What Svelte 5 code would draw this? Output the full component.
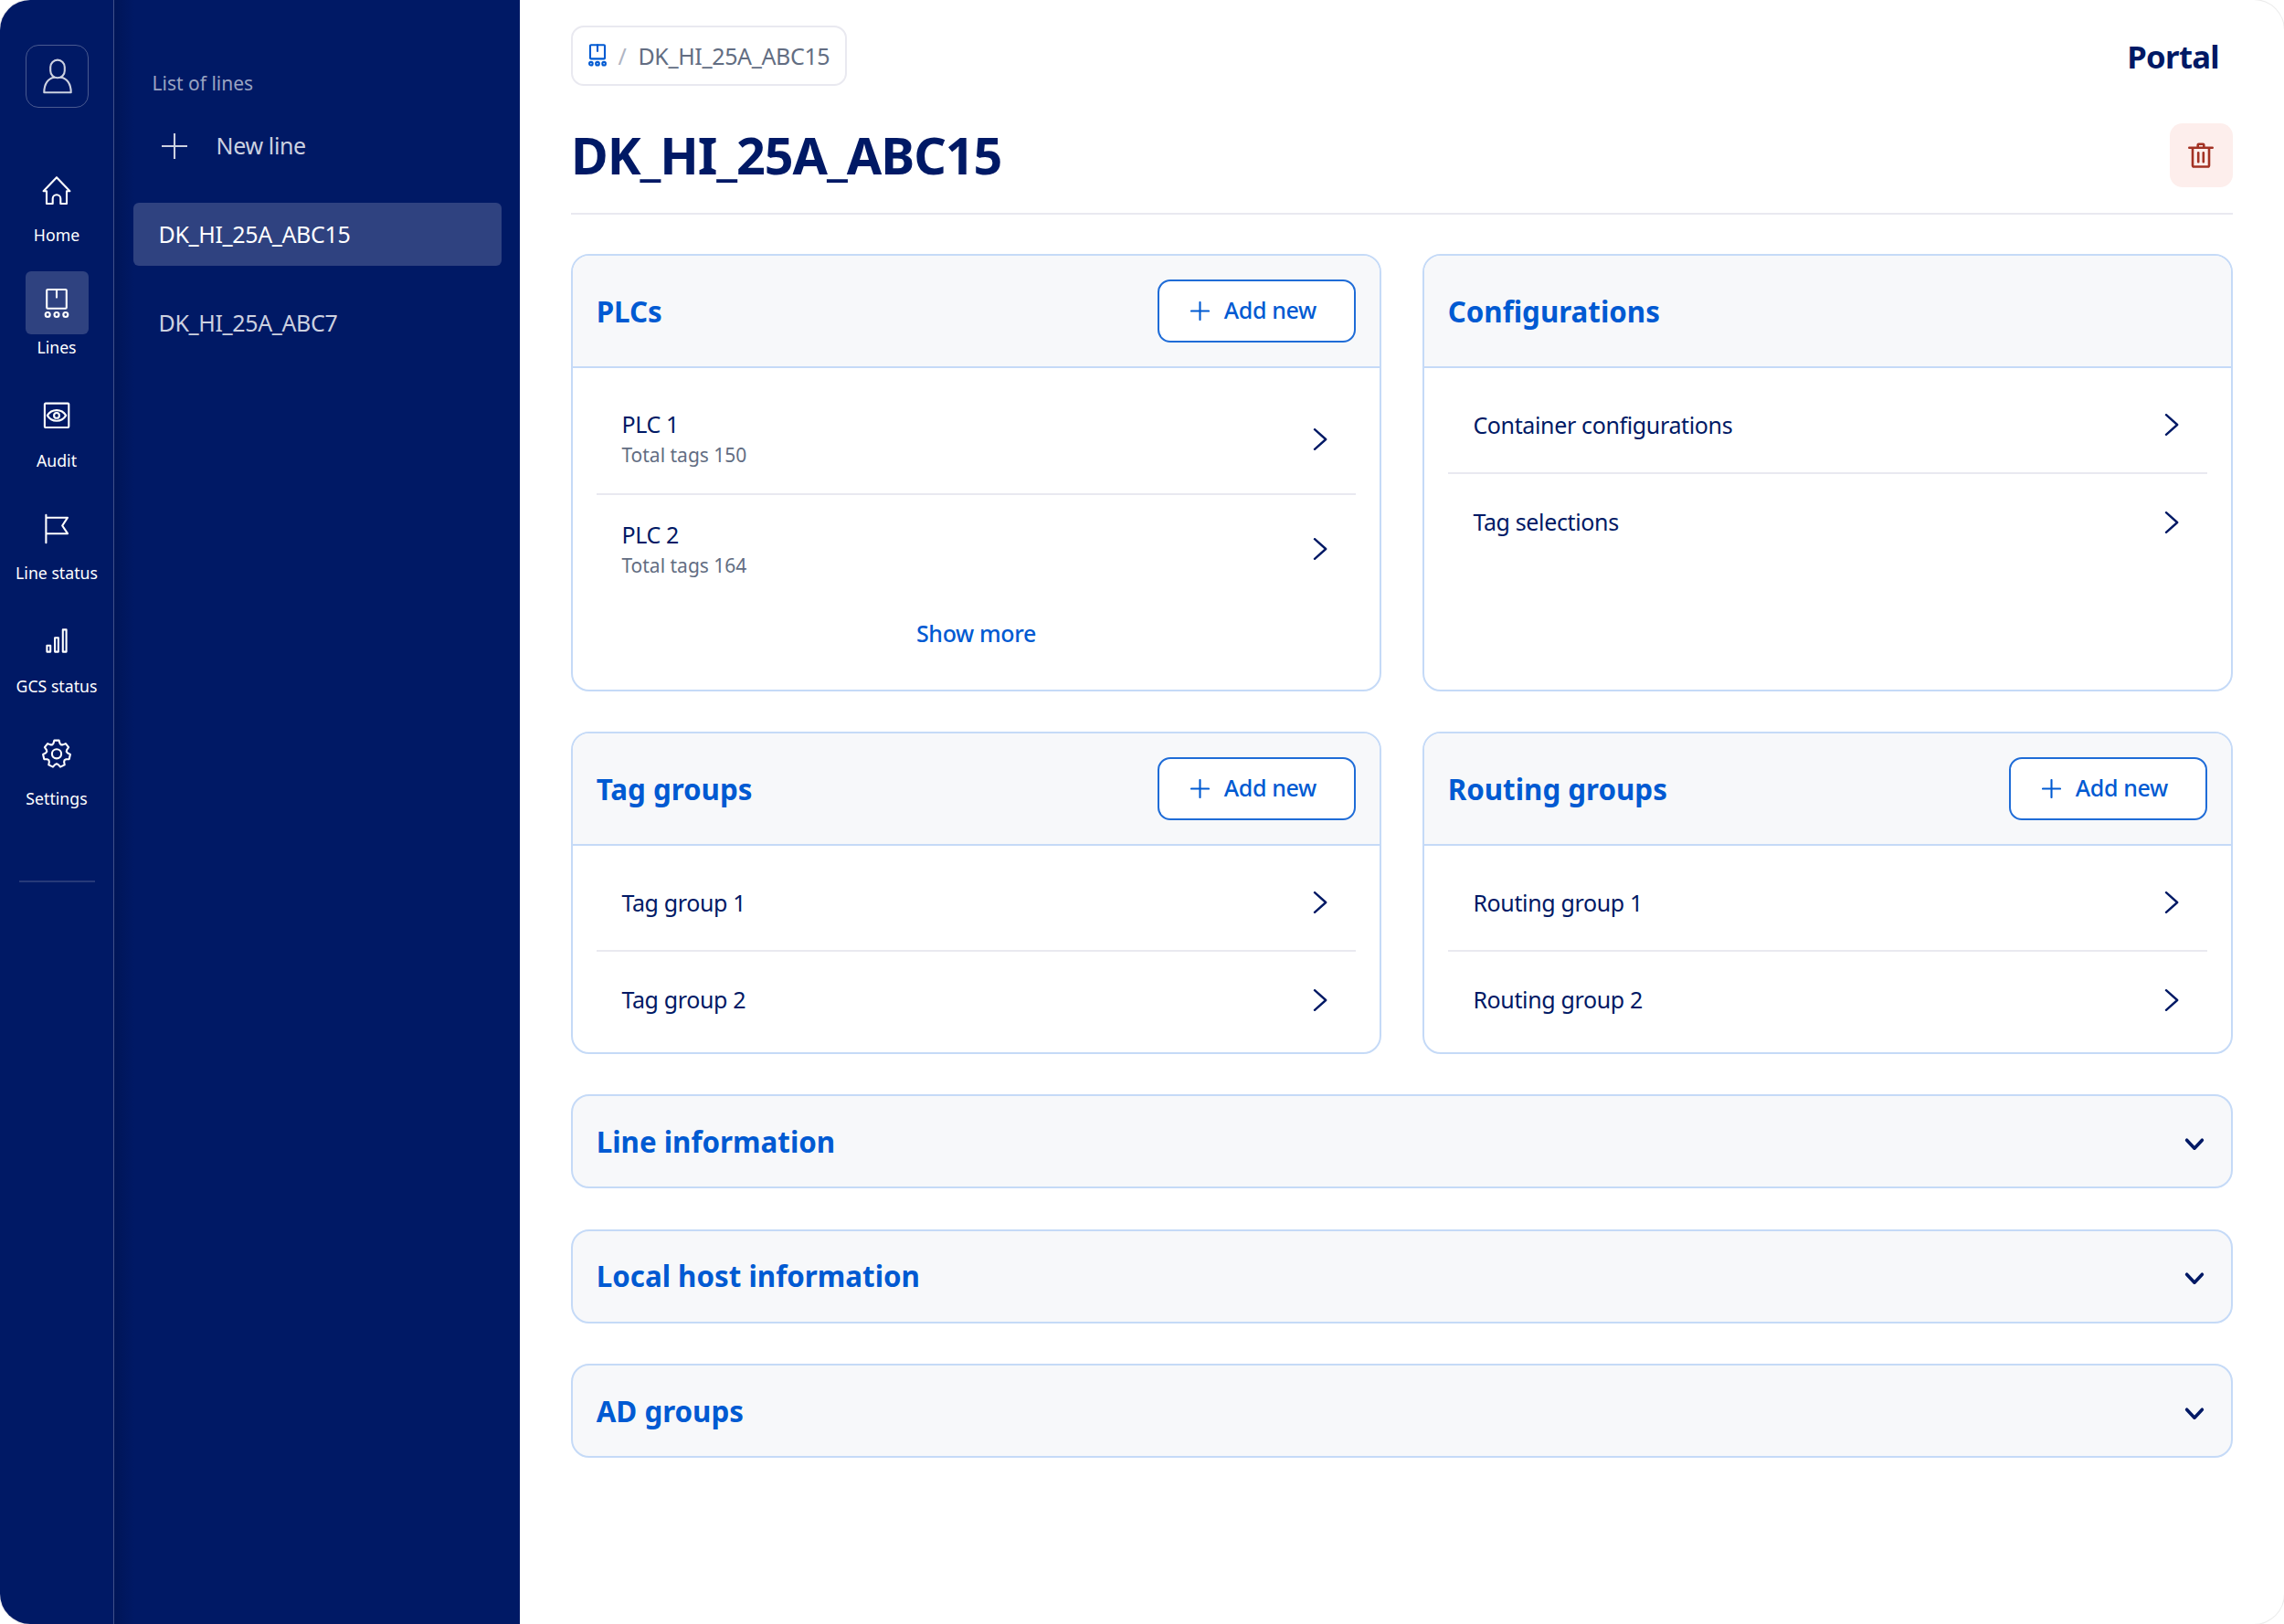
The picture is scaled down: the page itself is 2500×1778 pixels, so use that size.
<script>
	const navItems = [
		{ key: "home", title: "Home" },
		{ key: "lines", title: "Lines" },
		{ key: "audit", title: "Audit" },
		{ key: "flag", title: "Line status" },
		{ key: "bars", title: "GCS status" },
		{ key: "gear", title: "Settings" },
	];

	const lines = ["DK_HI_25A_ABC15", "DK_HI_25A_ABC7"];

	let activeNav = "lines";
	let activeLine = lines[0];

	const cards = [
		{
			title: "PLCs",
			canAdd: true,
			more: true,
			rows: [
				{ name: "PLC 1", note: "Total tags 150" },
				{ name: "PLC 2", note: "Total tags 164" },
			],
		},
		{
			title: "Configurations",
			rows: [{ name: "Container configurations" }, { name: "Tag selections" }],
		},
		{
			title: "Tag groups",
			canAdd: true,
			rows: [{ name: "Tag group 1" }, { name: "Tag group 2" }],
		},
		{
			title: "Routing groups",
			canAdd: true,
			rows: [{ name: "Routing group 1" }, { name: "Routing group 2" }],
		},
	];

	const sections = ["Line information", "Local host information", "AD groups"];

	// outline of the seven-toothed settings wheel
	function gearPath(cx, cy) {
		const steps = [[-10, 14.9], [10, 14.9], [17, 12], [25.7, 11], [34.4, 12]];
		const points = [];
		for (let i = 0; i < 7; i++) {
			for (const [deg, r] of steps) {
				const a = ((i * 360) / 7 + deg) * (Math.PI / 180);
				points.push(`${(cx + r * Math.sin(a)).toFixed(2)} ${(cy - r * Math.cos(a)).toFixed(2)}`);
			}
		}
		return "M" + points.join("L") + "Z";
	}
</script>

<div class="app">
	<nav class="rail">
		<button class="avatar" aria-label="Account">
			<svg width="36" height="42" viewBox="0 0 36 42">
				<rect x="10.2" y="2.6" width="15.6" height="19.6" rx="7.8" />
				<path d="M14.4 21.8C8 22.6 3.3 28.5 3.3 38.2H32.7C32.7 28.5 28 22.6 21.6 21.8" />
			</svg>
		</button>
		{#each navItems as item}
			<button class="nav-item" class:active={item.key === activeNav} on:click={() => (activeNav = item.key)}>
				<span class="nav-icon">
					<svg width="36" height="36" viewBox="0 0 36 36">
						{#if item.key === "home"}
							<path d="M7 33V19.2H3.6L18 4.2L32.4 19.2H29V33H22.3V27.6A4.3 4.3 0 0 0 13.7 27.6V33Z" />
						{:else if item.key === "lines"}
							<rect x="7.2" y="3" width="21.6" height="20.8" rx="1" />
							<path d="M18 3V11.6" />
							<circle cx="8.2" cy="30.5" r="2.5" />
							<circle cx="18" cy="30.5" r="2.5" />
							<circle cx="27.8" cy="30.5" r="2.5" />
						{:else if item.key === "audit"}
							<rect x="4.9" y="4.6" width="26.4" height="26.4" rx="1" />
							<path d="M7.8 17.9C12.5 10.2 23.5 10.2 28.2 17.9C23.5 25.6 12.5 25.6 7.8 17.9Z" />
							<circle cx="18" cy="17.9" r="2.9" />
						{:else if item.key === "flag"}
							<path d="M6.4 2.9V33.2M6.4 5.7H30L24.2 14.5L30 23.2H6.4" />
						{:else if item.key === "bars"}
							<rect x="7.4" y="22.8" width="3.8" height="6.8" />
							<rect x="16.1" y="14.2" width="3.8" height="15.4" />
							<rect x="24.8" y="5.4" width="3.8" height="24.2" />
						{:else}
							<path d={gearPath(18, 17.3)} />
							<circle cx="18" cy="17.3" r="5.1" />
						{/if}
					</svg>
				</span>
				<span class="nav-label">{item.title}</span>
			</button>
		{/each}
		<hr />
	</nav>

	<aside class="list">
		<p class="list-title">List of lines</p>
		<button class="new-line">
			<svg width="28" height="28" viewBox="0 0 28 28"><path d="M14 0V28M0 14H28" /></svg>
			<span>New line</span>
		</button>
		{#each lines as line}
			<button class="line" class:active={line === activeLine} on:click={() => (activeLine = line)}>{line}</button>
		{/each}
	</aside>

	<main>
		<header class="top">
			<div class="crumbs">
				<svg width="20" height="25" viewBox="0 0 20 25">
					<rect x="2" y="1.2" width="16" height="15.2" rx="1" />
					<path d="M10 1.2V8" />
					<circle cx="2.9" cy="21.7" r="1.8" />
					<circle cx="10" cy="21.7" r="1.8" />
					<circle cx="17.1" cy="21.7" r="1.8" />
				</svg>
				<span class="slash">/</span>
				<span>{activeLine}</span>
			</div>
			<span class="brand">Portal</span>
		</header>

		<div class="heading">
			<h1>{activeLine}</h1>
			<button class="delete" aria-label="Delete line">
				<svg width="28" height="28" viewBox="0 0 28 28">
					<path d="M1.3 5.7H26.7M10.7 5.2V2.8A1 1 0 0 1 11.7 1.8H16.3A1 1 0 0 1 17.3 2.8V5.2M5 5.7V25A1.3 1.3 0 0 0 6.3 26.5H21.7A1.3 1.3 0 0 0 23 25V5.7M11.2 11.2V21.3M16.8 11.2V21.3" />
				</svg>
			</button>
		</div>

		<div class="cards">
			{#each cards as card}
				<section class="card">
					<div class="card-head">
						<h2>{card.title}</h2>
						{#if card.canAdd}
							<button class="add">
								<svg width="21" height="21" viewBox="0 0 21 21"><path d="M10.5 1V20M1 10.5H20" /></svg>
								<span>Add new</span>
							</button>
						{/if}
					</div>
					<div class="card-body">
						{#each card.rows as row}
							<div class="row" class:tall={row.note}>
								<div>
									<div class="name">{row.name}</div>
									{#if row.note}
										<div class="note">{row.note}</div>
									{/if}
								</div>
								<svg width="24" height="24" viewBox="0 0 24 24"><path d="M6 1.2L18.2 12L6 22.8" /></svg>
							</div>
						{/each}
						{#if card.more}
							<button class="more">Show more</button>
						{/if}
					</div>
				</section>
			{/each}
		</div>

		{#each sections as title}
			<section class="collapsed">
				<h2>{title}</h2>
				<svg width="22" height="16" viewBox="0 0 22 16"><path d="M2.6 3.2L11 12.2L19.4 3.2" /></svg>
			</section>
		{/each}
	</main>
</div>

<style>
	:global(body) {
		background: #fff;
	}

	.app {
		display: flex;
		box-sizing: border-box;
		width: 2500px;
		height: 1778px;
		overflow: hidden;
		border-radius: 33px;
		box-shadow: 0 0 0 1px rgba(0, 0, 0, 0.08);
		background: #fff;
		font-family: "Noto Sans", sans-serif;
		font-size: 25px;
		letter-spacing: -0.36px;
		color: #001965;
	}

	button {
		margin: 0;
		padding: 0;
		border: 0;
		background: none;
		font: inherit;
		letter-spacing: inherit;
		color: inherit;
	}

	svg {
		flex: none;
		fill: none;
		stroke: currentColor;
		stroke-width: 2.1;
		stroke-linecap: round;
		stroke-linejoin: round;
	}

	h1, h2, p {
		margin: 0;
	}

	.rail {
		display: flex;
		flex-direction: column;
		align-items: center;
		box-sizing: border-box;
		width: 125px;
		padding: 49px 0 0 1px;
		background: #001965;
		border-right: 1px solid #405089;
		color: #fff;
	}

	.avatar {
		display: flex;
		align-items: center;
		justify-content: center;
		box-sizing: border-box;
		width: 69px;
		height: 69px;
		margin-bottom: 55.5px;
		border: 1px solid #4a5a90;
		border-radius: 14px;
		color: #ccd1e0;
	}

	.nav-item {
		display: flex;
		flex-direction: column;
		align-items: center;
		height: 123.5px;
	}

	.nav-icon {
		display: flex;
		align-items: center;
		justify-content: center;
		width: 69.4px;
		height: 69.4px;
		border-radius: 6px;
	}

	.nav-item.active .nav-icon {
		background: #2f4280;
	}

	.nav-label {
		margin-right: 1px;
		font-size: 17.7px;
		line-height: 28px;
		letter-spacing: 0;
		white-space: nowrap;
	}

	.rail hr {
		width: 83px;
		height: 2px;
		margin: 49px 0 0;
		border: 0;
		background: #263a79;
	}

	.list {
		display: flex;
		flex-direction: column;
		box-sizing: border-box;
		width: 444px;
		padding: 76px 20.5px 0;
		background: linear-gradient(90deg, #001558, #001965 22px);
		color: #ccd1e0;
	}

	.list-title {
		padding-left: 21px;
		font-size: 21px;
		line-height: 30px;
		letter-spacing: 0;
		color: #99a3c1;
	}

	.new-line {
		display: flex;
		align-items: center;
		gap: 32px;
		height: 40px;
		margin: 34px 0 42px;
		padding-left: 31px;
	}

	.new-line span {
		margin-top: -2px;
	}

	.line {
		height: 69.4px;
		margin-bottom: 27.8px;
		padding: 0 0 1px 28px;
		border-radius: 6px;
		text-align: left;
	}

	.line.active {
		background: #2f4280;
		color: #fff;
	}

	main {
		flex: 1;
		padding: 28px 56px 0;
	}

	.top {
		display: flex;
		align-items: center;
		justify-content: space-between;
		height: 66px;
	}

	.crumbs {
		display: flex;
		align-items: center;
		box-sizing: border-box;
		height: 66px;
		padding: 0 17px 1px;
		border: 2px solid #e9e9f0;
		border-radius: 14px;
		color: #626d82;
	}

	.crumbs svg {
		color: #005ad2;
	}

	.slash {
		margin: 0 13px 0 12.5px;
		color: #b0b5c3;
	}

	.brand {
		padding-right: 15px;
		font-size: 34.7px;
		font-weight: 700;
		letter-spacing: -0.02em;
	}

	.heading {
		display: flex;
		align-items: center;
		justify-content: space-between;
		box-sizing: border-box;
		height: 141px;
		margin-bottom: 43px;
		padding-top: 13px;
		border-bottom: 2px solid #e9e9f0;
	}

	h1 {
		font-size: 55.6px;
		line-height: 70px;
		letter-spacing: -0.019em;
	}

	.delete {
		display: flex;
		align-items: center;
		justify-content: center;
		width: 69.4px;
		height: 69.4px;
		border-radius: 14px;
		background: #fdeeec;
		color: #a33224;
	}

	.delete svg {
		stroke-width: 2.6;
	}

	.cards {
		display: grid;
		grid-template-columns: 1fr 1fr;
		grid-template-rows: 479px 353px;
		gap: 44px 45px;
	}

	.card {
		box-sizing: border-box;
		overflow: hidden;
		border: 2px solid #c5daf7;
		border-radius: 20px;
	}

	.card-head {
		display: flex;
		align-items: center;
		justify-content: space-between;
		box-sizing: border-box;
		height: 123px;
		padding: 0 25.7px;
		border-bottom: 2px solid #c5daf7;
		background: #f7f8fa;
	}

	h2 {
		font-size: 31.3px;
		line-height: 42px;
		letter-spacing: 0;
		color: #005ad2;
	}

	.add {
		display: flex;
		align-items: center;
		justify-content: center;
		gap: 16px;
		box-sizing: border-box;
		width: 217px;
		height: 69.4px;
		padding-right: 8px;
		border: 2px solid #1f6cd7;
		border-radius: 14px;
		background: #fff;
		font-weight: 500;
		color: #005ad2;
	}

	.add span {
		margin-top: -2px;
	}

	.card-body {
		display: flex;
		flex-direction: column;
		padding: 10px 25.7px 0;
	}

	.row {
		display: flex;
		align-items: center;
		justify-content: space-between;
		box-sizing: border-box;
		height: 105px;
		padding: 0 27.7px;
	}

	.row svg {
		stroke-width: 2.4;
	}

	.row:first-child {
		height: 106px;
		border-bottom: 2px solid #e9e9f0;
	}

	.row.tall {
		height: 119.5px;
	}

	.row.tall:first-child {
		height: 128.5px;
		padding-top: 9px;
	}

	.name {
		line-height: 34px;
		margin-top: -1px;
	}

	.row.tall .name {
		margin-top: 1px;
	}

	.note {
		font-size: 21px;
		line-height: 34px;
		letter-spacing: 0;
		color: #626d82;
	}

	.more {
		align-self: center;
		margin-top: 15px;
		font-weight: 500;
		color: #005ad2;
	}

	.collapsed {
		display: flex;
		align-items: center;
		justify-content: space-between;
		box-sizing: border-box;
		height: 103px;
		margin-top: 44.4px;
		padding: 0 28.7px 0 25.7px;
		border: 2px solid #c5daf7;
		border-radius: 20px;
		background: #f7f8fa;
	}

	.collapsed svg {
		margin-top: 6px;
		stroke-width: 3.6;
	}
</style>
